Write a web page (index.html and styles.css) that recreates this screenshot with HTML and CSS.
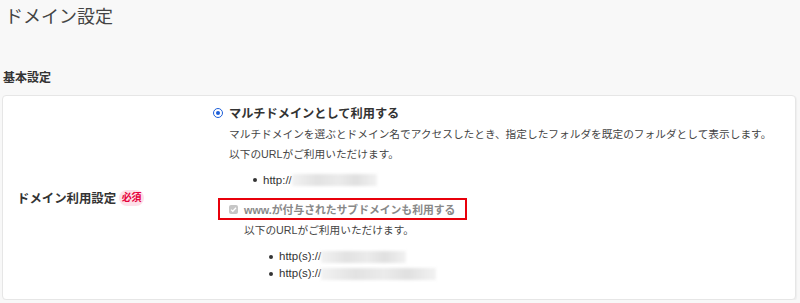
FILE: index.html
```html
<!DOCTYPE html>
<html lang="ja">
<head>
    <meta charset="UTF-8">
    <title>ドメイン設定</title>
    <link rel="stylesheet" href="styles.css">
</head>
<body>
    <div class="page">
        <h1>ドメイン設定</h1>
        <h2>基本設定</h2>

        <div class="card">
            <div class="card-label">
                <span>ドメイン利用設定</span>
                <span class="badge">必須</span>
            </div>
            <div class="card-body">
                <div class="radio-row">
                    <span class="radio"></span>
                    <span>マルチドメインとして利用する</span>
                </div>
                <p class="desc">マルチドメインを選ぶとドメイン名でアクセスしたとき、指定したフォルダを既定のフォルダとして表示します。<br>以下のURLがご利用いただけます。</p>
                <ul class="url-list">
                    <li>http://<span class="blur" style="width: 85px"></span></li>
                </ul>

                <div class="check-box">
                    <span class="check">
                        <svg width="9" height="9" viewBox="0 0 9 9"><path d="M2 4.6 L3.8 6.3 L7 2.8" fill="none" stroke="#fff" stroke-width="1.3"/></svg>
                    </span>
                    <span>www.が付与されたサブドメインも利用する</span>
                </div>
                <p class="desc sub">以下のURLがご利用いただけます。</p>
                <ul class="url-list sub">
                    <li>http(s)://<span class="blur" style="width: 85px"></span></li>
                    <li>http(s)://<span class="blur" style="width: 115px"></span></li>
                </ul>
            </div>
        </div>
    </div>
</body>
</html>
```

FILE: styles.css
```css
/* 全体 */
body {
    margin: 0;
    background-color: #f8f8f8;
    color: #333;
    font-family: "Liberation Sans", "Noto Sans CJK JP", sans-serif;
}

.page {
    padding: 0 4px 0 2px;
}

h1 {
    margin: 0;
    padding-left: 3px;
    font-size: 18px;
    font-weight: normal;
    line-height: 34px;
    color: #444;
}

h2 {
    margin: 36px 0 9px 1px;
    font-size: 12px;
    line-height: 16px;
    font-weight: bold;
}

/* カード */
.card {
    display: flex;
    background-color: #fff;
    border: 1px solid #e6e6e6;
    border-radius: 4px;
    box-shadow: 1px 1px 1px rgba(0, 0, 0, 0.04);
}

.card-label {
    width: 210px;
    box-sizing: border-box;
    padding-left: 14px;
    display: flex;
    align-items: center;
    font-size: 12.4px;
    font-weight: bold;
}

.badge {
    margin-left: 3px;
    width: 25px;
    height: 16px;
    border-radius: 8px;
    background-color: #fde0e9;
    color: #e6003c;
    font-size: 10px;
    line-height: 16px;
    text-align: center;
}

.card-body {
    flex: 1;
    padding: 7px 0 17px;
}

/* ラジオ */
.radio-row {
    display: flex;
    align-items: center;
    gap: 6px;
    height: 20px;
    font-size: 12.2px;
    font-weight: bold;
}

.radio {
    width: 10px;
    height: 10px;
    box-sizing: border-box;
    border: 1.5px solid #1c5ed8;
    border-radius: 50%;
    display: flex;
    justify-content: center;
    align-items: center;
}

.radio::after {
    content: "";
    width: 4px;
    height: 4px;
    border-radius: 50%;
    background-color: #1c5ed8;
}

.desc {
    margin: 1px 0 0 16px;
    font-size: 10.7px;
    line-height: 20px;
    color: #444;
}

.desc.sub {
    margin: 0 0 0 31px;
}

/* URL一覧 */
.url-list {
    list-style: none;
    margin: 6px 0 0;
    padding-left: 40px;
    font-size: 11.5px;
    line-height: 20px;
}

.url-list.sub {
    margin-top: 8px;
    padding-left: 56px;
    line-height: 17px;
}

.url-list li {
    display: flex;
    align-items: center;
}

.url-list li::before {
    content: "";
    width: 4px;
    height: 4px;
    border-radius: 50%;
    background-color: #333;
    margin-right: 6px;
}

.blur {
    display: inline-block;
    height: 12px;
    background: linear-gradient(90deg, #f2f2f2, #e2e2e2 30%, #ebebeb 55%, #e0e0e0 75%, #f2f2f2);
    filter: blur(1.5px);
}

/* チェックボックス(赤枠) */
.check-box {
    display: flex;
    align-items: center;
    gap: 6px;
    width: fit-content;
    margin: 8px 0 0 5px;
    padding: 0 10px 0 9px;
    height: 18px;
    border: 2px solid #e8000b;
    font-size: 10.8px;
    font-weight: bold;
    color: #888;
}

.check {
    width: 9px;
    height: 9px;
    border-radius: 2px;
    background-color: #c6c6c6;
    display: flex;
}
```
